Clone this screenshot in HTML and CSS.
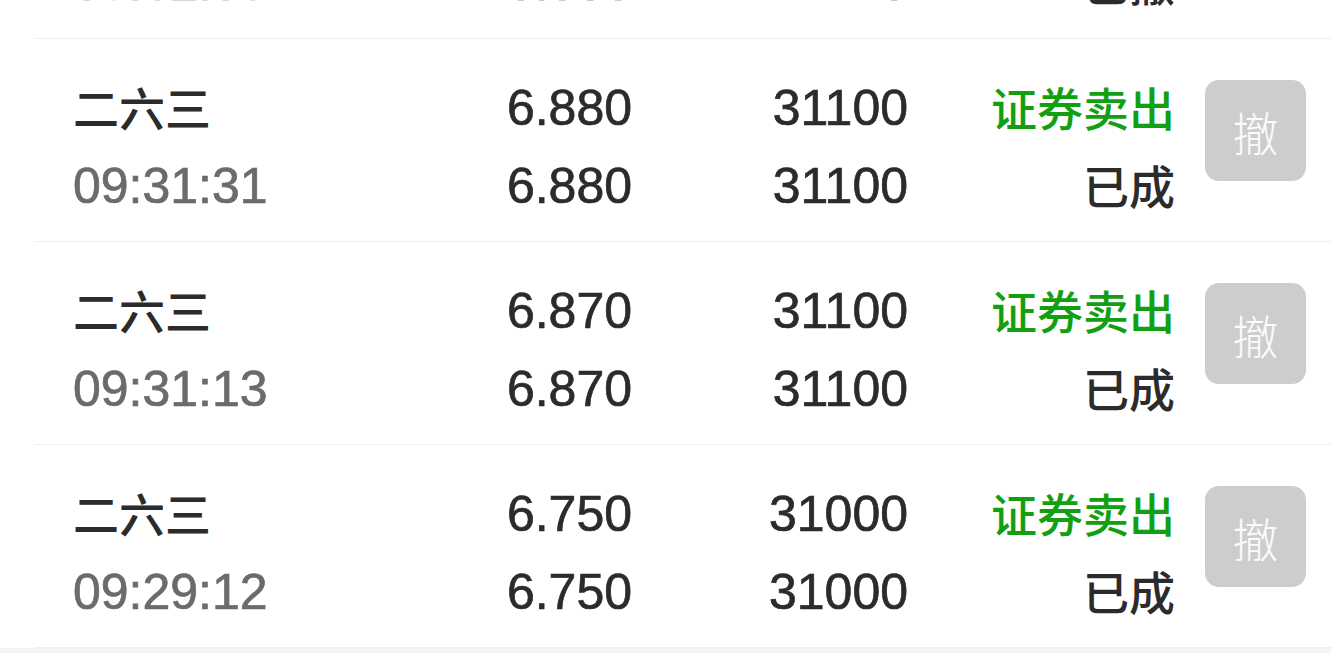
FILE: index.html
```html
<!DOCTYPE html>
<html lang="zh-CN">
<head>
  <meta charset="UTF-8">
  <meta name="viewport" content="width=device-width, initial-scale=1">
  <title>当日委托</title>
  <link rel="stylesheet" href="styles.css">
</head>
<body>

  <div class="order-list">
    <div class="order">
      <div class="col name">
        <span class="cjk">二六三</span>
        <span class="time">09:32:05</span>
      </div>
      <div class="col num">
        <span>6.900</span>
        <span>0.000</span>
      </div>
      <div class="col num">
        <span>31100</span>
        <span>0</span>
      </div>
      <div class="col status">
        <span class="cjk sell">证券卖出</span>
        <span class="cjk">已撤</span>
      </div>
      <div class="col"></div>
    </div>

    <div class="order">
      <div class="col name">
        <span class="cjk">二六三</span>
        <span class="time">09:31:31</span>
      </div>
      <div class="col num">
        <span>6.880</span>
        <span>6.880</span>
      </div>
      <div class="col num">
        <span>31100</span>
        <span>31100</span>
      </div>
      <div class="col status">
        <span class="cjk sell">证券卖出</span>
        <span class="cjk">已成</span>
      </div>
      <div class="col">
        <button class="cancel">撤</button>
      </div>
    </div>

    <div class="order">
      <div class="col name">
        <span class="cjk">二六三</span>
        <span class="time">09:31:13</span>
      </div>
      <div class="col num">
        <span>6.870</span>
        <span>6.870</span>
      </div>
      <div class="col num">
        <span>31100</span>
        <span>31100</span>
      </div>
      <div class="col status">
        <span class="cjk sell">证券卖出</span>
        <span class="cjk">已成</span>
      </div>
      <div class="col">
        <button class="cancel">撤</button>
      </div>
    </div>

    <div class="order">
      <div class="col name">
        <span class="cjk">二六三</span>
        <span class="time">09:29:12</span>
      </div>
      <div class="col num">
        <span>6.750</span>
        <span>6.750</span>
      </div>
      <div class="col num">
        <span>31000</span>
        <span>31000</span>
      </div>
      <div class="col status">
        <span class="cjk sell">证券卖出</span>
        <span class="cjk">已成</span>
      </div>
      <div class="col">
        <button class="cancel">撤</button>
      </div>
    </div>
  </div>

</body>
</html>
```

FILE: styles.css
```css
body {
  margin: 0;
  background-color: #f5f5f7;
  color: #2b2b2b;
  font-family: "Liberation Sans", "Noto Sans CJK SC", sans-serif;
  overflow: hidden;
}
.order-list {
  margin-top: -164px;
  padding-left: 34px;
  background: #fff;
}
.order {
  display: grid;
  grid-template-columns: 407px 152px 276px 267px 131px;
  height: 203px;
  box-sizing: border-box;
  padding: 30px 0 0 39px;
  border-bottom: 1px solid #efeff1;
}
.col {
  display: flex;
  flex-direction: column;
}
.col span {
  display: block;
  height: 78px;
  line-height: 78px;
  font-size: 50px;
  white-space: nowrap;
  -webkit-text-stroke: 0.7px currentColor;
}
.col span.cjk {
  font-family: "Noto Sans CJK SC", sans-serif;
  font-size: 46px;
  font-weight: 500;
  line-height: 74px;
  -webkit-text-stroke: 0;
}
.num, .status {
  text-align: right;
}
.time {
  color: #6b6b6b;
}
.sell {
  color: #12a012;
}
.cancel {
  width: 101px;
  height: 101px;
  margin: 11px 0 0 30px;
  padding: 0;
  border: none;
  border-radius: 14px;
  background: #cdcdcd;
  color: #fbfbfb;
  font-family: "Noto Sans CJK SC", sans-serif;
  font-size: 46px;
  font-weight: 300;
}
```
